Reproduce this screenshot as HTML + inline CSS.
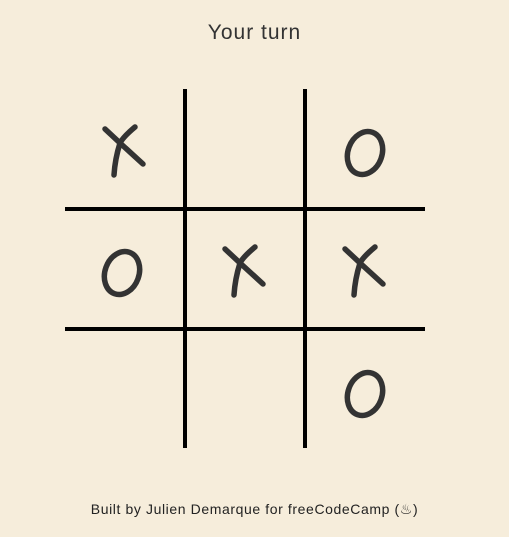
<!DOCTYPE html>
<html><head><style>
html,body{margin:0;padding:0;width:509px;height:537px;background:#f6eddb;overflow:hidden;font-family:"Liberation Sans",sans-serif;color:#333}
.t{position:absolute;top:21px;left:0;width:509px;text-align:center;font-size:21px;letter-spacing:1px}
.f{position:absolute;top:501px;left:0;width:509px;text-align:center;font-size:14px;letter-spacing:0.6px;color:#222}
svg{position:absolute;left:0;top:0}
</style></head><body>
<div class="t">Your turn</div>
<svg width="509" height="537">
<defs>
<g id="x" fill="none" stroke="#333" stroke-width="5.5" stroke-linecap="round" stroke-linejoin="round">
<path d="M-20,-20 L-5,-6"/>
<path d="M10,-22 Q-2,-12 -5,-6 L18,15"/>
<path d="M-5,-6 Q-10,10 -11,26"/>
</g>
<g id="o" fill="none" stroke="#333" stroke-width="5.5" stroke-linecap="round">
<ellipse cx="0" cy="0" rx="17" ry="22" transform="rotate(20)"/>
</g>
</defs>
<g fill="#000">
<rect x="183" y="89" width="4" height="359"/>
<rect x="303" y="89" width="4" height="359"/>
<rect x="65" y="207" width="360" height="4"/>
<rect x="65" y="327" width="360" height="4"/>
</g>
<use href="#x" x="125" y="149"/>
<use href="#o" x="365" y="153"/>
<use href="#o" x="122" y="273"/>
<use href="#x" x="245" y="269"/>
<use href="#x" x="365" y="269"/>
<use href="#o" x="365" y="394"/>
</svg>
<div class="f">Built by Julien Demarque for freeCodeCamp (♨)</div>
</body></html>
